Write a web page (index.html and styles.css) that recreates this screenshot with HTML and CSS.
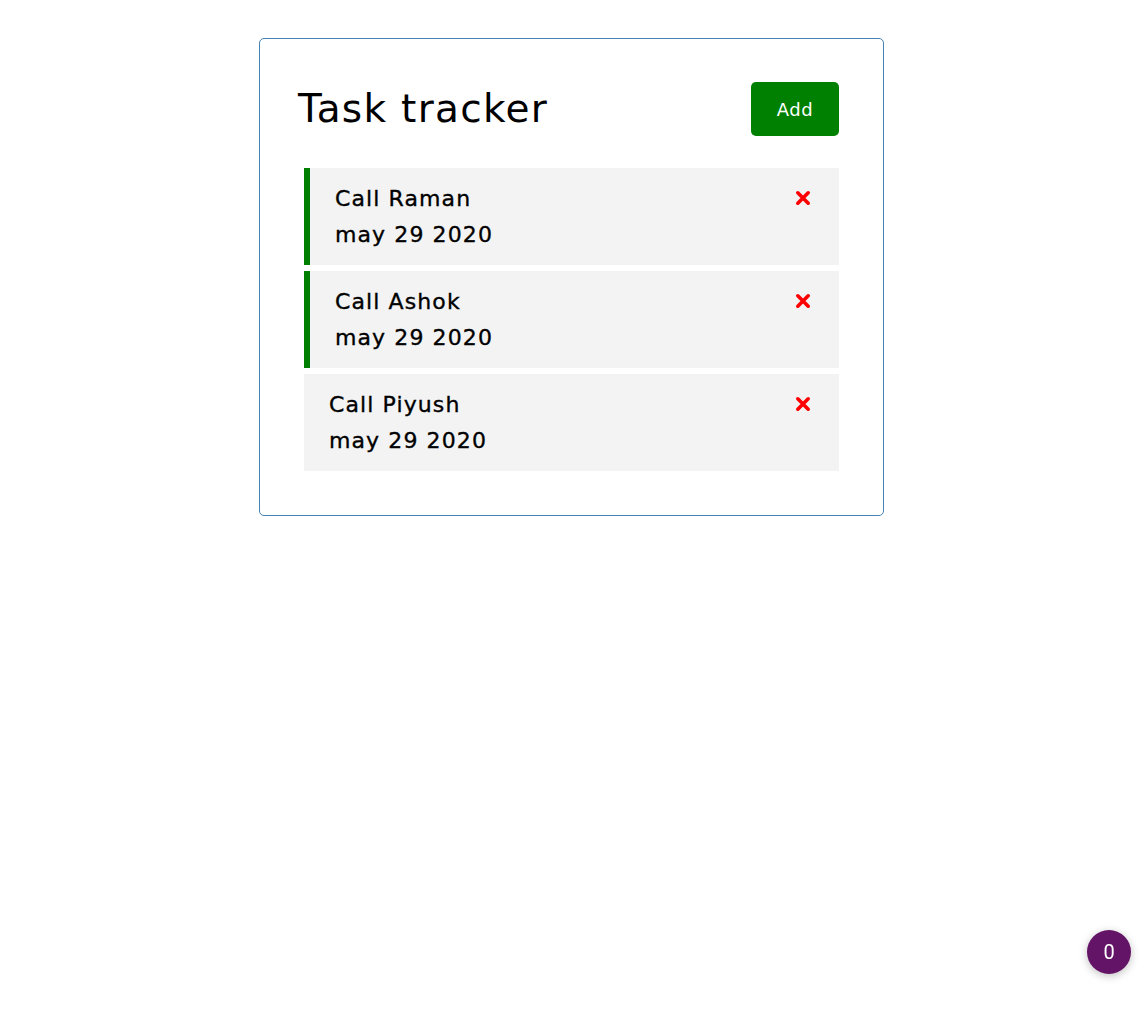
FILE: index.html
```html
<!DOCTYPE html>
<html lang="en">
<head>
<meta charset="utf-8">
<title>Task tracker</title>
<link rel="stylesheet" href="styles.css">
</head>
<body>
<div class="container">
  <header class="header">
    <h1 class="title">Task tracker</h1>
    <button class="btn">Add</button>
  </header>
  <div class="tasks">
    <div class="task reminder">
      <div class="task-text">
        <div class="task-name">Call Raman</div>
        <div class="task-day">may 29 2020</div>
      </div>
      <svg class="del" viewBox="0 0 16 16" width="16" height="16"><path d="M2.8 2.8 L13.2 13.2 M13.2 2.8 L2.8 13.2" stroke="#ff0000" stroke-width="3.6" stroke-linecap="round"/></svg>
    </div>
    <div class="task reminder">
      <div class="task-text">
        <div class="task-name">Call Ashok</div>
        <div class="task-day">may 29 2020</div>
      </div>
      <svg class="del" viewBox="0 0 16 16" width="16" height="16"><path d="M2.8 2.8 L13.2 13.2 M13.2 2.8 L2.8 13.2" stroke="#ff0000" stroke-width="3.6" stroke-linecap="round"/></svg>
    </div>
    <div class="task">
      <div class="task-text">
        <div class="task-name">Call Piyush</div>
        <div class="task-day">may 29 2020</div>
      </div>
      <svg class="del" viewBox="0 0 16 16" width="16" height="16"><path d="M2.8 2.8 L13.2 13.2 M13.2 2.8 L2.8 13.2" stroke="#ff0000" stroke-width="3.6" stroke-linecap="round"/></svg>
    </div>
  </div>
</div>
<div class="badge">0</div>
</body>
</html>
```
FILE: styles.css
```css
* { box-sizing: border-box; }
body {
  margin: 8px;
  font-family: "DejaVu Sans", "Open Sans", sans-serif;
  background: #fff;
  color: #000;
}
.container {
  width: 625px;
  margin: 30px auto;
  border: 1px solid steelblue;
  border-radius: 5px;
  padding: 43px 44px 44px 38px;
}
.header {
  display: flex;
  justify-content: space-between;
  align-items: center;
  margin-bottom: 32px;
}
.title {
  margin: 0;
  font-size: 39px;
  font-weight: 400;
  line-height: 54px;
  letter-spacing: 1.3px;
}
.btn {
  width: 88px;
  height: 54px;
  background: #008000;
  color: #fff;
  border: none;
  border-radius: 5px;
  font-family: inherit;
  font-size: 18px;
  letter-spacing: 0.5px;
  cursor: pointer;
}
.tasks {
  display: flex;
  flex-direction: column;
  gap: 6px;
  margin-left: 6px;
}
.task {
  display: flex;
  justify-content: space-between;
  align-items: flex-start;
  background: #f3f3f3;
  height: 97px;
  padding: 13px 28px 0 25px;
}
.task.reminder {
  border-left: 6px solid #008000;
}
.task-name, .task-day {
  font-size: 22px;
  font-weight: 400;
  line-height: 36px;
  letter-spacing: 1.1px;
  -webkit-text-stroke: 0.35px #000;
}
.del {
  margin-top: 9px;
}
.badge {
  position: fixed;
  right: 12px;
  bottom: 41px;
  width: 44px;
  height: 44px;
  border-radius: 50%;
  background: #641466;
  color: #fff;
  font-family: "Roboto", sans-serif;
  font-size: 20px;
  display: flex;
  align-items: center;
  justify-content: center;
  box-shadow: 0 2px 8px rgba(0,0,0,0.25);
}
```
